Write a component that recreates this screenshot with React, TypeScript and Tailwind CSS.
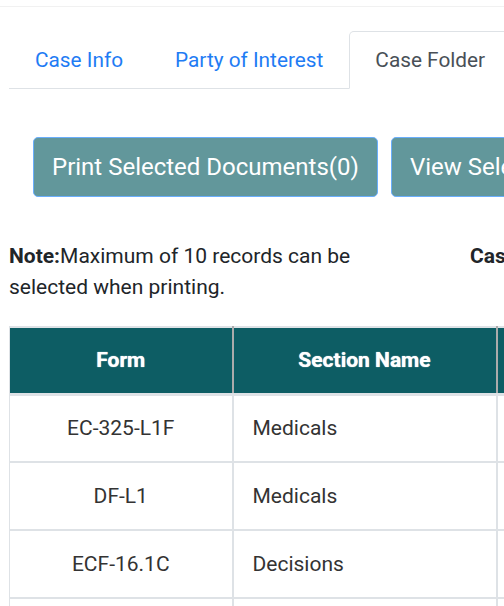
import React from "react";

const ROWS = [
  { form: "EC-325-L1F", section: "Medicals", date: "01/12/2023" },
  { form: "DF-L1", section: "Medicals", date: "01/12/2023" },
  { form: "ECF-16.1C", section: "Decisions", date: "01/12/2023" },
  { form: "C-3", section: "Claims", date: "01/12/2023" },
];

const App: React.FC = () => {
  return (
    <div
      className="w-[504px] h-[606px] overflow-hidden bg-white text-[#212529]"
      style={{ fontFamily: "Roboto, 'Noto Sans', sans-serif" }}
    >
      <div className="h-[7px] border-b border-[#f1f1f1]" />

      <div className="pl-[9px] w-[760px]">
        {/* tabs */}
        <div className="mt-[24px] flex border-b border-[#dee2e6] text-[20.8px] leading-[30px]">
          <div className="px-[25px] pt-[13px] pb-[12px] text-[#1f7cf4] border border-transparent">
            Case Info
          </div>
          <div className="px-[25px] pt-[13px] pb-[12px] text-[#1f7cf4] border border-transparent">
            Party of Interest
          </div>
          <div className="-mb-px px-[25px] pt-[13px] pb-[12px] text-[#495057] bg-white border border-[#dee2e6] border-b-white rounded-t-[5px]">
            Case Folder
          </div>
        </div>

        {/* buttons */}
        <div className="mt-[48px] ml-[24px] flex gap-[13px]">
          <button className="shrink-0 whitespace-nowrap h-[60px] px-[18px] rounded-[5px] border border-[#6aaefc] bg-[#62979b] text-white text-[24px] leading-[36px]">
            Print Selected Documents(0)
          </button>
          <button className="shrink-0 whitespace-nowrap h-[60px] px-[18px] rounded-[5px] border border-[#6aaefc] bg-[#62979b] text-white text-[24px] leading-[36px]">
            View Selected Documents(0)
          </button>
        </div>

        {/* note */}
        <div className="mt-[44px] flex text-[21px] leading-[31px]">
          <p className="w-[410px] shrink-0">
            <span className="font-bold">Note:</span>Maximum of 10 records can be selected when printing.
          </p>
          <p className="ml-[51px] font-bold whitespace-nowrap">Case Number:</p>
        </div>

        {/* table */}
        <table className="mt-[23px] border-collapse text-[21px] leading-[31px]">
          <thead>
            <tr className="bg-[#0d5d64] text-white">
              <th className="w-[223px] h-[67px] border-t-2 border-b-[3px] border-l border-[#dee2e6] border-r-[2px] border-r-[#ababab] font-bold [text-shadow:0_0_1px_#ffffff]">
                Form
              </th>
              <th className="w-[264px] border-t-2 border-b-[3px] border-[#dee2e6] border-r-[2px] border-r-[#ababab] font-bold [text-shadow:0_0_1px_#ffffff]">
                Section Name
              </th>
              <th className="w-[220px] border-t-2 border-b-[3px] border-[#dee2e6] border-r-[2px] border-r-[#ababab] font-bold [text-shadow:0_0_1px_#ffffff]">
                Document Date
              </th>
            </tr>
          </thead>
          <tbody className="text-[#333333]">
            {ROWS.map((r) => (
              <tr key={r.form}>
                <td className="h-[68px] text-center border-l border-r-2 border-b-2 border-[#dee2e6]">
                  {r.form}
                </td>
                <td className="pl-[19px] border-r-2 border-b-2 border-[#dee2e6]">{r.section}</td>
                <td className="pl-[19px] border-r-2 border-b-2 border-[#dee2e6]">{r.date}</td>
              </tr>
            ))}
          </tbody>
        </table>
      </div>
    </div>
  );
};

export default App;
